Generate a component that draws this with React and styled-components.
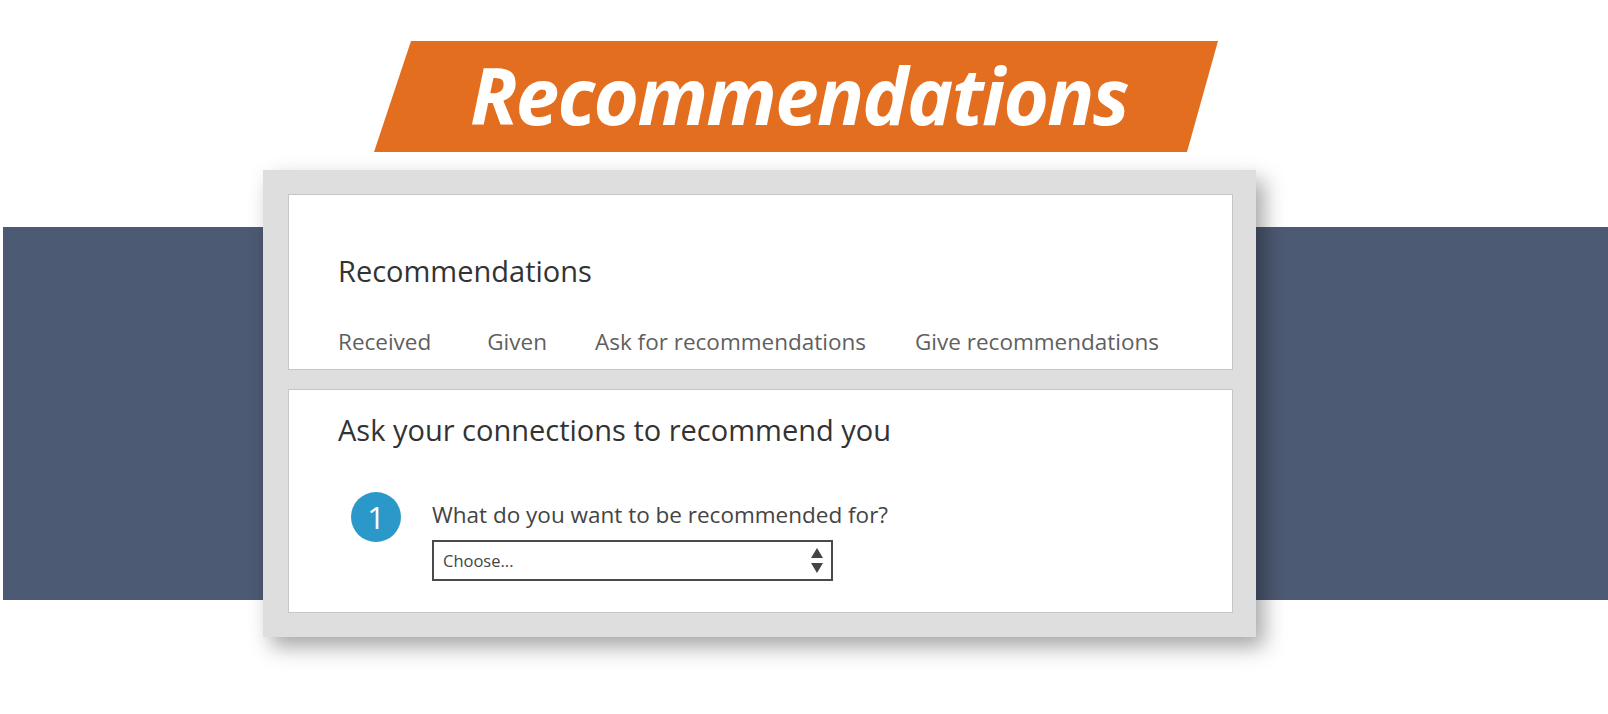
import styled, { createGlobalStyle } from "styled-components";

const GlobalStyle = createGlobalStyle`
  html, body {
    margin: 0;
    padding: 0;
    background: #ffffff;
  }
  body {
    font-family: "Open Sans", "Liberation Sans", sans-serif;
  }
`;

const tabs = [
  { label: "Received", gap: 56 },
  { label: "Given", gap: 48 },
  { label: "Ask for recommendations", gap: 49 },
  { label: "Give recommendations", gap: 0 },
];

const App = () => {
  return (
    <Page>
      <GlobalStyle />
      <Banner>
        <BannerTitle>Recommendations</BannerTitle>
      </Banner>
      <Stage>
        <Card>
          <Panel>
            <Heading>Recommendations</Heading>
            <TabRow>
              {tabs.map((tab) => (
                <Tab key={tab.label} $gap={tab.gap}>
                  {tab.label}
                </Tab>
              ))}
            </TabRow>
          </Panel>
          <AskPanel>
            <AskHeading>Ask your connections to recommend you</AskHeading>
            <StepRow>
              <StepBadge>1</StepBadge>
              <StepBody>
                <Question>What do you want to be recommended for?</Question>
                <Select>
                  <span>Choose...</span>
                  <svg width="12" height="26" viewBox="0 0 12 26">
                    <path d="M6 0 L12 10 L0 10 Z" fill="#444" />
                    <path d="M0 15 L12 15 L6 25 Z" fill="#444" />
                  </svg>
                </Select>
              </StepBody>
            </StepRow>
          </AskPanel>
        </Card>
      </Stage>
    </Page>
  );
};

const Page = styled.div`
  width: 1608px;
  height: 714px;
  padding-top: 41px;
  box-sizing: border-box;
  overflow: hidden;
`;

const Banner = styled.div`
  margin-left: 374px;
  width: 844px;
  height: 111px;
  background: #e36e1f;
  clip-path: polygon(37px 0, 100% 0, calc(100% - 31px) 100%, 0 100%);
  display: flex;
  align-items: center;
  justify-content: center;
  padding-left: 6px;
  box-sizing: border-box;
`;

const BannerTitle = styled.h1`
  margin: 0;
  color: #ffffff;
  font-family: "Open Sans", "Liberation Sans", sans-serif;
  font-style: italic;
  font-weight: 700;
  font-size: 78px;
  letter-spacing: -1.7px;
  line-height: 1;
  position: relative;
  top: -2px;
`;

const Stage = styled.div`
  margin-top: 18px;
  background: linear-gradient(#4d5a73, #4d5a73) no-repeat;
  background-position: 3px 57px;
  background-size: calc(100% - 3px) 373px;
  padding-bottom: 60px;
`;

const Card = styled.div`
  margin-left: 263px;
  width: 993px;
  box-sizing: border-box;
  background: #dedede;
  padding: 24px 23px 24px 25px;
  display: flex;
  flex-direction: column;
  gap: 19px;
  box-shadow: 8px 10px 20px rgba(0, 0, 0, 0.35);
`;

const Panel = styled.section`
  background: #ffffff;
  border: 1px solid #c6c6c6;
  padding: 56px 49px 12px;
`;

const AskPanel = styled(Panel)`
  padding: 20px 49px 31px;
`;

const Heading = styled.h2`
  margin: 0;
  font-size: 29px;
  line-height: 40px;
  font-weight: 400;
  color: #333333;
`;

const AskHeading = styled(Heading)``;

const TabRow = styled.nav`
  display: flex;
  margin-top: 36px;
`;

const Tab = styled.span`
  font-size: 22.5px;
  line-height: 30px;
  color: #5f5f5f;
  margin-right: ${(p) => p.$gap}px;
`;

const StepRow = styled.div`
  display: flex;
  align-items: flex-start;
  margin-top: 42px;
  padding-left: 13px;
  gap: 31px;
`;

const StepBadge = styled.div`
  width: 50px;
  height: 50px;
  border-radius: 50%;
  background: #2a98c9;
  color: #ffffff;
  font-size: 31px;
  font-weight: 400;
  line-height: 50px;
  text-align: center;
  flex-shrink: 0;
`;

const StepBody = styled.div`
  display: flex;
  flex-direction: column;
  gap: 10px;
  padding-top: 8px;
`;

const Question = styled.p`
  margin: 0;
  font-size: 22.5px;
  line-height: 30px;
  color: #444444;
`;

const Select = styled.div`
  width: 401px;
  height: 41px;
  box-sizing: border-box;
  border: 2px solid #4a4a4a;
  display: flex;
  align-items: center;
  justify-content: space-between;
  padding: 0 8px 0 9px;
  font-size: 16.5px;
  color: #444444;
`;

export default App;
